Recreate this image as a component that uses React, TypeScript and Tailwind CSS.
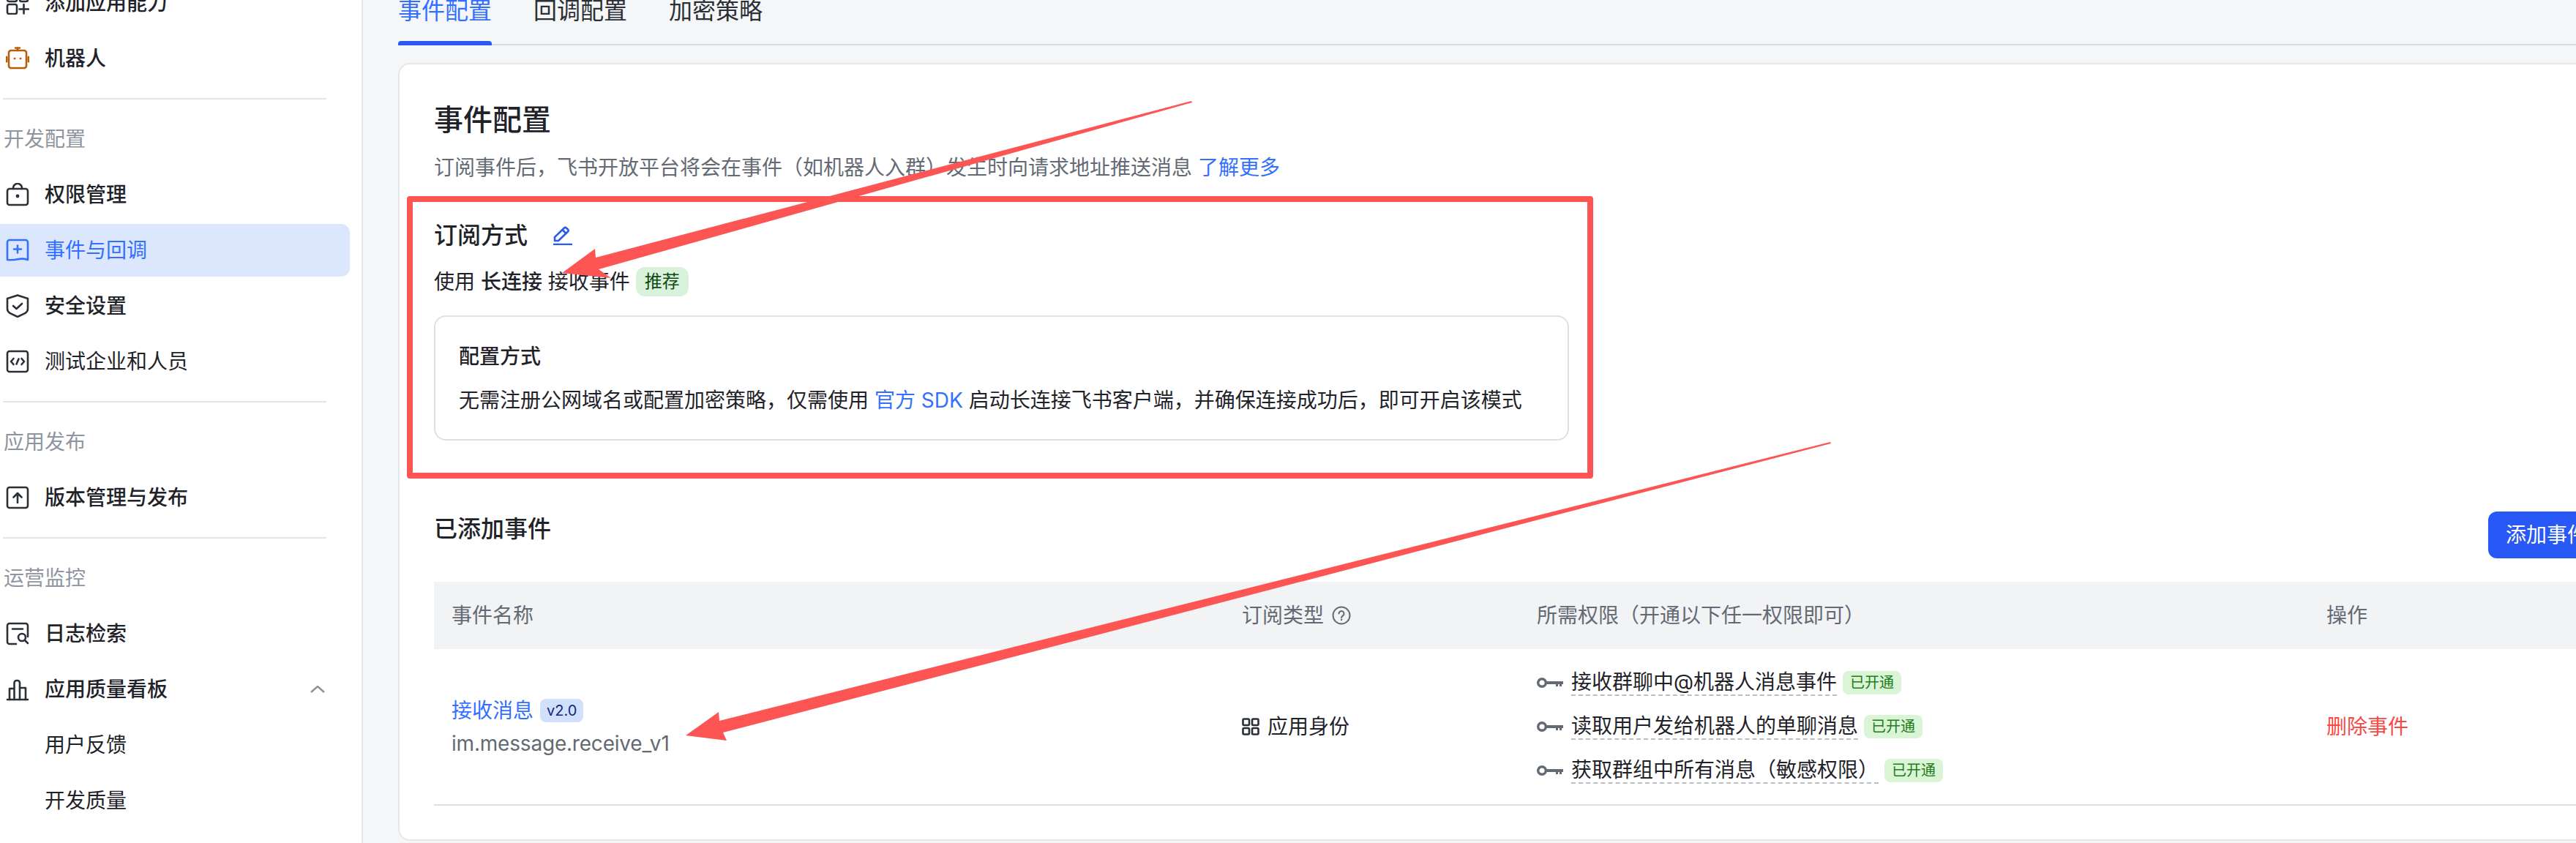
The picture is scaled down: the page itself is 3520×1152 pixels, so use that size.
import React from 'react';

const fontStack = 'font-[Inter,"Noto_Sans_CJK_SC",sans-serif]';

function Ico({ children, color = '#2b2f36' }: { children: React.ReactNode; color?: string }) {
  return (
    <svg viewBox="0 0 32 32" className="w-[32px] h-[32px] shrink-0" fill="none" stroke={color} strokeWidth="2.6" strokeLinecap="round" strokeLinejoin="round">
      {children}
    </svg>
  );
}

const AddIcon = () => (
  <Ico>
    <rect x="2" y="1" width="13" height="13" rx="2.5" />
    <rect x="2" y="18" width="13" height="13" rx="2.5" />
    <rect x="19" y="1" width="11" height="13" rx="2.5" />
    <path d="M24.5 18v12.500M18.500 24.500h12.500" />
  </Ico>
);

const RobotIcon = () => (
  <Ico color="#b4600a">
    <rect x="4" y="5" width="24" height="24" rx="3" />
    <path d="M16 5V1.500M13 1.500h6" />
    <path d="M1 14v6M31 14v6" strokeWidth="3" />
    <circle cx="12" cy="16" r="1" fill="#b4600a" strokeWidth="1" />
    <circle cx="20" cy="16" r="1" fill="#b4600a" strokeWidth="1" />
  </Ico>
);

const BagIcon = () => (
  <Ico>
    <rect x="2" y="8" width="28" height="22" rx="3" />
    <path d="M10 8V7a6 6 0 0 1 12 0v1" />
    <circle cx="16" cy="18" r="2.400" fill="#2b2f36" stroke="none" />
  </Ico>
);

const EventIcon = () => (
  <Ico color="#3370ff">
    <path d="M5 2h22a3 3 0 0 1 3 3v24c-4.500-1.500-9-2-14-.700-5 1.300-9.500 1.200-14 .700V5a3 3 0 0 1 3-3z" />
    <path d="M16 9.500v10M11 14.500h10" />
  </Ico>
);

const ShieldIcon = () => (
  <Ico>
    <path d="M16 1.500l14 4.500v14c0 3-1.500 4.500-3.500 5.800L16 31l-10.500-5.200C3.500 24.500 2 23 2 20V6z" />
    <path d="M10 16l4.500 4 7.500-7" />
  </Ico>
);

const CodeIcon = () => (
  <Ico>
    <rect x="2" y="2" width="28" height="28" rx="3" />
    <path d="M10.500 12L7 16l3.500 4M21.500 12L25 16l-3.500 4M17.500 12.500l-3 7" />
  </Ico>
);

const UploadIcon = () => (
  <Ico>
    <rect x="2" y="2" width="28" height="28" rx="3" />
    <path d="M16 23V10M10.500 15.500L16 10l5.500 5.500" />
  </Ico>
);

const LogIcon = () => (
  <Ico>
    <path d="M14 30H5a3 3 0 0 1-3-3V5a3 3 0 0 1 3-3h22a3 3 0 0 1 3 3v15" />
    <path d="M9 9.500h14" />
    <circle cx="22" cy="21" r="5" />
    <path d="M26 25l4 4" />
  </Ico>
);

const ChartIcon = () => (
  <Ico>
    <path d="M2 30h28" />
    <path d="M5 30V15h6.500M11.500 30V7a3 3 0 0 1 3-3h1.500a3 3 0 0 1 3 3v23M19 14h8v16" />
  </Ico>
);

type NavItem = { label: string; icon?: React.ReactNode; active?: boolean; medium?: boolean; caret?: boolean };

function NavRow({ item }: { item: NavItem }) {
  return (
    <div
      className={`h-[72px] w-[478px] flex items-center gap-[21px] pl-[8px] rounded-r-[12px] text-[28px] ${
        item.active ? 'bg-[#dce7fd] text-[#3370ff]' : 'text-[#1f2329]'
      } ${item.medium ? 'font-medium' : ''}`}
    >
      {item.icon ? item.icon : <span className="w-[32px] shrink-0" />}
      <span className="whitespace-nowrap">{item.label}</span>
      {item.caret && (
        <svg viewBox="0 0 20 10" className="w-[20px] h-[10px] ml-auto mr-[34px]" fill="none" stroke="#8f959e" strokeWidth="2.6">
          <path d="M1 9l9-8 9 8" />
        </svg>
      )}
    </div>
  );
}

function NavGroup({ title, items }: { title?: string; items: NavItem[] }) {
  return (
    <div className="flex flex-col">
      {title && <div className="h-[44px] leading-[44px] mt-[32px] mb-[18px] pl-[5px] text-[28px] text-[#8f959e]">{title}</div>}
      <div className="flex flex-col gap-[4px]">
        {items.map((it) => (
          <NavRow key={it.label} item={it} />
        ))}
      </div>
    </div>
  );
}

const Divider = () => <div className="h-[2px] w-[442px] ml-[4px] mt-[18px] bg-[#e4e5e7]" />;

function Sidebar() {
  return (
    <aside className="w-[496px] h-[1152px] shrink-0 bg-white border-r-2 border-[#e6e7ea] overflow-hidden">
      <div className="-mt-[32px] flex flex-col">
        <NavGroup
          items={[
            { label: '添加应用能力', icon: <AddIcon />, medium: true },
            { label: '机器人', icon: <RobotIcon />, medium: true },
          ]}
        />
        <Divider />
        <NavGroup
          title="开发配置"
          items={[
            { label: '权限管理', icon: <BagIcon />, medium: true },
            { label: '事件与回调', icon: <EventIcon />, active: true },
            { label: '安全设置', icon: <ShieldIcon />, medium: true },
            { label: '测试企业和人员', icon: <CodeIcon /> },
          ]}
        />
        <Divider />
        <NavGroup title="应用发布" items={[{ label: '版本管理与发布', icon: <UploadIcon />, medium: true }]} />
        <Divider />
        <NavGroup
          title="运营监控"
          items={[
            { label: '日志检索', icon: <LogIcon />, medium: true },
            { label: '应用质量看板', icon: <ChartIcon />, medium: true, caret: true },
            { label: '用户反馈' },
            { label: '开发质量' },
          ]}
        />
      </div>
    </aside>
  );
}

function KeyIcon() {
  return (
    <svg viewBox="0 0 36 14" className="w-[36px] h-[14px] shrink-0" fill="none">
      <circle cx="7" cy="7" r="5.300" stroke="#646a73" strokeWidth="3.400" />
      <path d="M12 5h24v4h-2v3h-3V9h-2v3h-3V9H12z" fill="#646a73" />
    </svg>
  );
}

function Permission({ name }: { name: string }) {
  return (
    <div className="h-[60px] flex items-center">
      <KeyIcon />
      <span className="ml-[11px] h-[36px] leading-[34px] border-b-2 border-dashed border-[#bbbfc4] text-[28px] text-[#1f2329] whitespace-nowrap">{name}</span>
      <span className="ml-[8px] h-[32px] leading-[32px] px-[10px] rounded-[8px] bg-[#d9f5d6] text-[20px] text-[#237b19] whitespace-nowrap">已开通</span>
    </div>
  );
}

function EventTable() {
  return (
    <div className="mt-[32px] text-[28px]">
      <div className="h-[92px] bg-[#f2f3f5] grid grid-cols-[1080px_403px_1079px_405px] items-center text-[#646a73]">
        <div className="pl-[24px]">事件名称</div>
        <div className="pl-[24px] flex items-center gap-[11px]">
          订阅类型
          <svg viewBox="0 0 26 26" className="w-[26px] h-[26px]" fill="none" stroke="#646a73" strokeWidth="2">
            <circle cx="13" cy="13" r="11.500" />
            <path d="M9.500 10.500a3.500 3.500 0 1 1 5.500 2.900c-1.300.9-2 1.400-2 2.800" strokeLinecap="round" />
            <circle cx="13" cy="19" r="1.200" fill="#646a73" stroke="none" />
          </svg>
        </div>
        <div className="pl-[24px]">所需权限（开通以下任一权限即可）</div>
        <div className="pl-[24px]">操作</div>
      </div>
      <div className="h-[214px] border-b-2 border-[#dee0e3] grid grid-cols-[1080px_403px_1079px_405px] items-center">
        <div className="pl-[24px] flex flex-col gap-[5px]">
          <div className="h-[40px] flex items-center gap-[9px]">
            <span className="text-[#3370ff]">接收消息</span>
            <span className="h-[32px] leading-[32px] px-[9px] rounded-[8px] bg-[#d1e0fd] text-[20px] text-[#0f2a7a]">v2.0</span>
          </div>
          <div className="h-[40px] leading-[40px] text-[#646a73] tracking-[-0.2px]">im.message.receive_v1</div>
        </div>
        <div className="pl-[24px] flex items-center gap-[11px] text-[#1f2329]">
          <svg viewBox="0 0 24 24" className="w-[24px] h-[24px]" fill="none" stroke="#2b2f36" strokeWidth="2.600">
            <rect x="1.500" y="1.500" width="8.500" height="8.500" rx="1.500" />
            <rect x="14" y="1.500" width="8.500" height="8.500" rx="1.500" />
            <rect x="1.500" y="14" width="8.500" height="8.500" rx="1.500" />
            <rect x="14" y="14" width="8.500" height="8.500" rx="1.500" />
          </svg>
          应用身份
        </div>
        <div className="pl-[24px] flex flex-col">
          <Permission name="接收群聊中@机器人消息事件" />
          <Permission name="读取用户发给机器人的单聊消息" />
          <Permission name="获取群组中所有消息（敏感权限）" />
        </div>
        <div className="pl-[24px] text-[#f54a45]">删除事件</div>
      </div>
    </div>
  );
}

function Card() {
  return (
    <section className="mt-[24px] w-[3065px] h-[1063px] bg-white border-2 border-[#e6e7ea] rounded-[16px] pt-[48px] px-[47px]">
      <h1 className="text-[40px] leading-[56px] font-medium text-[#1f2329]">事件配置</h1>
      <p className="mt-[17px] text-[28px] leading-[40px] text-[#646a73]">
        订阅事件后，飞书开放平台将会在事件（如机器人入群）发生时向请求地址推送消息 <span className="text-[#3370ff]">了解更多</span>
      </p>
      <div className="mt-[51px] flex items-center gap-[35px]">
        <h2 className="text-[32px] leading-[44px] font-medium text-[#1f2329]">订阅方式</h2>
        <svg viewBox="0 0 26 26" className="w-[26px] h-[26px]" fill="none" stroke="#2b5cf0" strokeWidth="2.600" strokeLinejoin="round">
          <path d="M2 20v-5L15 2.500a2 2 0 0 1 2.800 0l2.200 2.200a2 2 0 0 1 0 2.800L7 20z" />
          <path d="M12.500 5l5 5" />
          <path d="M0 25h26" />
        </svg>
      </div>
      <div className="mt-[21px] flex items-center text-[28px] leading-[40px] text-[#1f2329]">
        <span>
          使用 <span className="font-medium">长连接</span> 接收事件
        </span>
        <span className="ml-[8px] h-[40px] leading-[40px] px-[12px] rounded-[12px] bg-[#d9f2dc] text-[24px] text-[#0e4a12]">推荐</span>
      </div>
      <div className="mt-[26px] w-[1551px] h-[171px] border-2 border-[#dee0e3] rounded-[16px] pt-[34px] px-[32px] text-[28px] leading-[40px] text-[#1f2329]">
        <div className="font-medium">配置方式</div>
        <div className="mt-[20px] whitespace-nowrap">
          无需注册公网域名或配置加密策略，仅需使用 <span className="text-[#3370ff]">官方 SDK</span> 启动长连接飞书客户端，并确保连接成功后，即可开启该模式
        </div>
      </div>
      <div className="mt-[97px] flex items-start justify-between">
        <h2 className="mt-[2px] text-[32px] leading-[44px] font-medium text-[#1f2329]">已添加事件</h2>
        <button className="h-[64px] w-[160px] rounded-[12px] bg-[#2858f5] text-[28px] text-white">添加事件</button>
      </div>
      <EventTable />
    </section>
  );
}

function Annotations() {
  return (
    <>
      <div className="absolute left-[556px] top-[268px] w-[1621px] h-[386px] border-8 border-[#fd5454] rounded-[4px]" />
      <svg className="absolute left-0 top-0 w-[3520px] h-[1152px]" viewBox="0 0 3520 1152" fill="#fd5454">
        <polygon points="1628,138 814,352 813,340 768,373 835,380 818,368 1629,140" />
        <polygon points="2501,604 983,985 982,973 937,1005 993,1012 988,1001 2502,606" />
      </svg>
    </>
  );
}

export default function App() {
  return (
    <div className={`relative w-[3520px] h-[1152px] overflow-hidden flex bg-[#f5f6f8] ${fontStack}`}>
      <Sidebar />
      <main className="flex-1 min-w-0 pl-[48px]">
        <div className="-mt-[7px] flex gap-[57px] border-b-2 border-[#d9dadd] text-[32px] leading-[44px]">
          <div className="h-[69px] -mb-[2px] flex flex-col justify-between text-[#3370ff]">
            <span>事件配置</span>
            <div className="h-[6px] rounded-t-[4px] bg-[#2858f5]" />
          </div>
          <div className="h-[67px] text-[#2b2f36]">回调配置</div>
          <div className="h-[67px] text-[#2b2f36]">加密策略</div>
        </div>
        <Card />
      </main>
      <Annotations />
    </div>
  );
}
